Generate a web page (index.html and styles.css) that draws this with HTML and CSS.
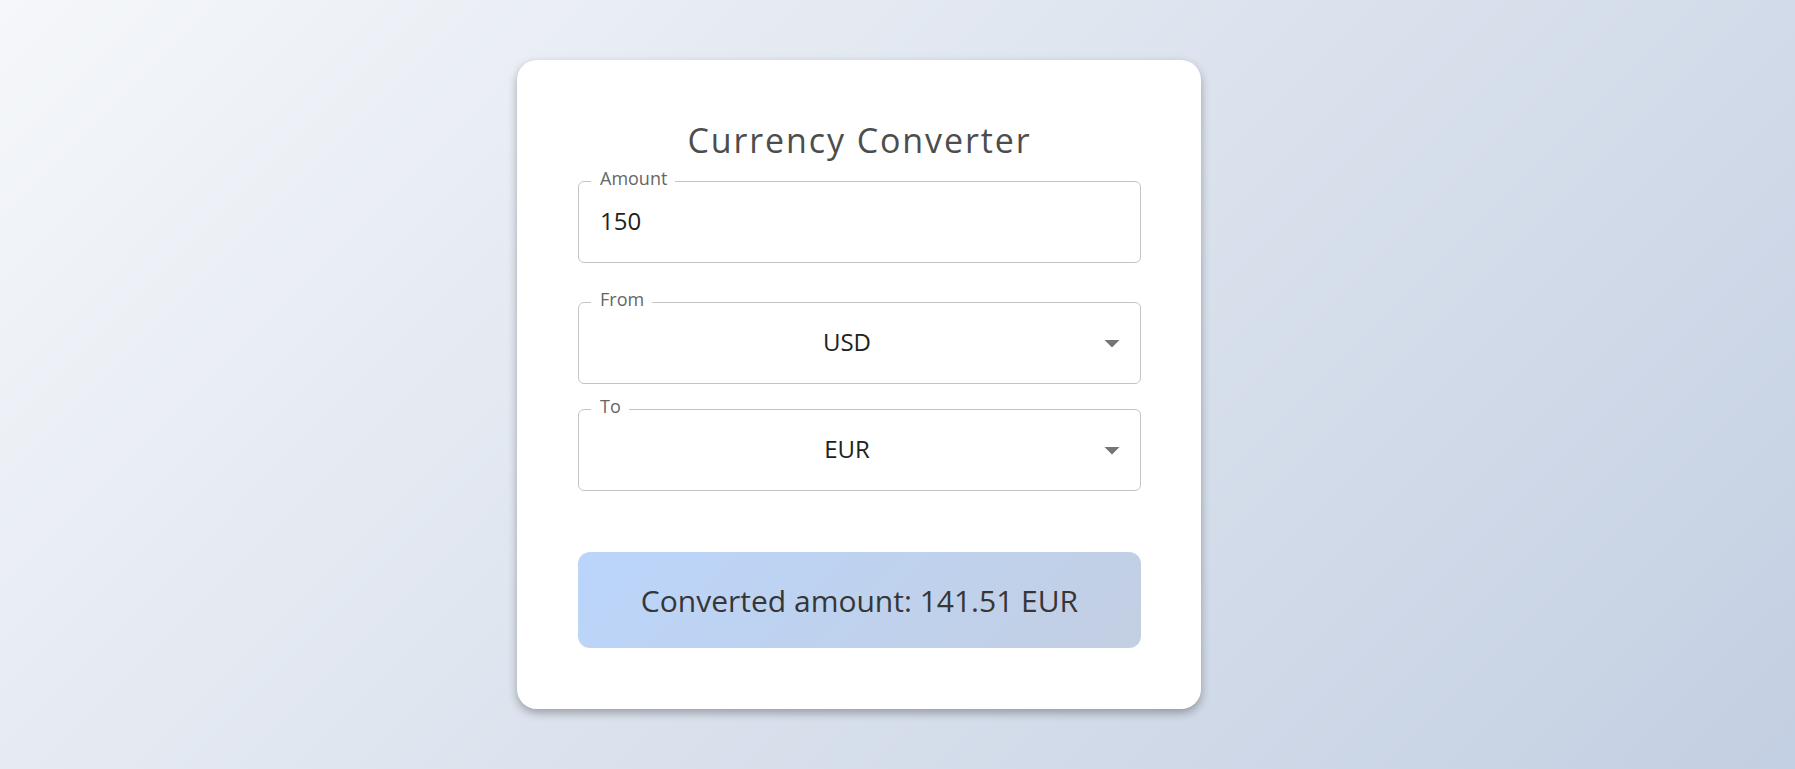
FILE: index.html
```html
<!DOCTYPE html>
<html lang="en">
<head>
<meta charset="utf-8">
<title>Currency Converter</title>
<link rel="stylesheet" href="styles.css">
</head>
<body>
<main class="page">
  <section class="card">
    <h1 class="title">Currency Converter</h1>

    <div class="field field-amount">
      <span class="field-label">Amount</span>
      <div class="field-value">150</div>
    </div>

    <div class="field field-select field-from">
      <span class="field-label">From</span>
      <div class="field-value centered">USD</div>
      <svg class="arrow" viewBox="0 0 24 24" width="36" height="36" aria-hidden="true"><path d="M7 10l5 5 5-5z"/></svg>
    </div>

    <div class="field field-select field-to">
      <span class="field-label">To</span>
      <div class="field-value centered">EUR</div>
      <svg class="arrow" viewBox="0 0 24 24" width="36" height="36" aria-hidden="true"><path d="M7 10l5 5 5-5z"/></svg>
    </div>

    <div class="result">Converted amount: 141.51 EUR</div>
  </section>
</main>
</body>
</html>
```

FILE: styles.css
```css
html, body {
  margin: 0;
  height: 100%;
}

body {
  background: linear-gradient(135deg, #f5f7fa 0%, #c3cfe2 100%);
  font-family: "Open Sans", "Liberation Sans", sans-serif;
}

.page {
  min-height: 100vh;
  box-sizing: border-box;
  display: flex;
  align-items: center;
  justify-content: center;
  padding-right: 77px;
}

.card {
  width: 684px;
  box-sizing: border-box;
  padding: 61px 60px 61px 61px;
  background: #ffffff;
  border-radius: 20px;
  box-shadow: 0 4px 10px rgba(0, 0, 0, 0.3);
  display: flex;
  flex-direction: column;
}

.title {
  margin: 0 0 21px;
  font-size: 34px;
  font-weight: 400;
  line-height: 39px;
  letter-spacing: 1.9px;
  text-align: center;
  color: #4d4d4d;
}

.field {
  position: relative;
  height: 82px;
  box-sizing: border-box;
  border: 1px solid #c4c4c4;
  border-radius: 6px;
  display: flex;
  align-items: flex-start;
}

.field-from {
  margin-top: 39px;
}

.field-to {
  margin-top: 25px;
}

.field-label {
  position: absolute;
  top: -13px;
  left: 12px;
  padding: 0 8px 0 9px;
  background: #ffffff;
  font-size: 18px;
  line-height: 18px;
  color: #666666;
}

.field-value {
  flex: 1;
  padding: 22px 21px 0;
  font-size: 24px;
  line-height: 34px;
  color: #212121;
}

.field-value.centered {
  text-align: center;
  padding-right: 0;
}

.arrow {
  align-self: center;
  flex: none;
  margin-right: 10px;
  fill: #757575;
}

.result {
  margin-top: 61px;
  height: 96px;
  border-radius: 12px;
  display: flex;
  align-items: center;
  justify-content: center;
  font-size: 30px;
  color: #363636;
  background: linear-gradient(135deg, #bad5fb 0%, #c3cfe2 100%);
}
```
